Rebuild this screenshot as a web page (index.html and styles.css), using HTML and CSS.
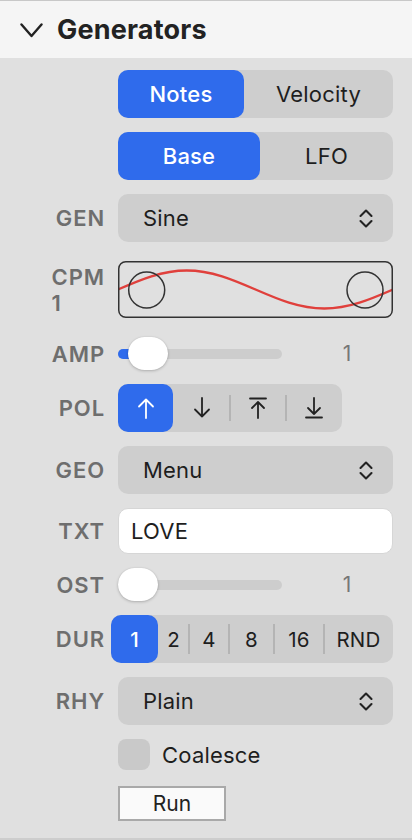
FILE: index.html
```html
<!DOCTYPE html>
<html>
<head>
<meta charset="utf-8">
<link rel="stylesheet" href="styles.css">
</head>
<body>
<div class="panel">
  <div class="header">
    <svg class="disclosure" width="23" height="15" viewBox="0 0 23 15"><polyline points="1.5,1.5 11.5,13 21.5,1.5" fill="none" stroke="#222" stroke-width="2.4" stroke-linecap="round" stroke-linejoin="round"/></svg>
    <span class="title">Generators</span>
  </div>
  <div class="form">
    <div class="seg seg-notes full">
      <div class="seg-item on">Notes</div>
      <div class="seg-item">Velocity</div>
    </div>
    <div class="seg seg-base full">
      <div class="seg-item on">Base</div>
      <div class="seg-item">LFO</div>
    </div>

    <div class="label">GEN</div>
    <div class="popup"><span>Sine</span>
      <svg class="updown" width="16" height="19" viewBox="0 0 16 19"><polyline points="2.5,7 8,1.5 13.5,7" fill="none" stroke="#222" stroke-width="2.1" stroke-linecap="round" stroke-linejoin="round"/><polyline points="2.5,12 8,17.5 13.5,12" fill="none" stroke="#222" stroke-width="2.1" stroke-linecap="round" stroke-linejoin="round"/></svg>
    </div>

    <div class="label label-multi">CPM<br>1</div>
    <div class="cpm">
      <svg width="275" height="57" viewBox="0 0 275 57">
        <path d="M0 28.5 C22.4 18.8 43.9 9.5 68.75 9.5 C93.6 9.5 115.1 18.8 137.5 28.5 C159.9 38.2 181.4 47.5 206.25 47.5 C231.1 47.5 252.6 38.2 275 28.5" fill="none" stroke="#e0403c" stroke-width="2.4"/>
        <rect x="0.75" y="0.75" width="273.5" height="55.5" rx="7" fill="none" stroke="#333" stroke-width="1.5"/>
        <circle cx="28.7" cy="29" r="18" fill="none" stroke="#333" stroke-width="1.5"/>
        <circle cx="247" cy="29" r="18" fill="none" stroke="#333" stroke-width="1.5"/>
      </svg>
    </div>

    <div class="label">AMP</div>
    <div class="slider-cell">
      <div class="slider">
        <div class="track"></div>
        <div class="fill" style="width:30px"></div>
        <div class="knob" style="left:10px"></div>
      </div>
      <span class="value">1</span>
    </div>

    <div class="label">POL</div>
    <div class="seg seg-pol">
      <div class="seg-item on"><svg width="18" height="22" viewBox="0 0 18 22"><path d="M9 2.5V21M2 9.5L9 2.5L16 9.5" fill="none" stroke="#fff" stroke-width="1.8" stroke-linecap="round" stroke-linejoin="round"/></svg></div>
      <div class="seg-item"><svg width="18" height="22" viewBox="0 0 18 22"><path d="M9 1V19.5M2 12.5L9 19.5L16 12.5" fill="none" stroke="#222" stroke-width="1.8" stroke-linecap="round" stroke-linejoin="round"/></svg></div>
      <div class="seg-item sep"><svg width="18" height="22" viewBox="0 0 18 22"><path d="M1 1.5H17M9 5V21M3 11L9 5L15 11" fill="none" stroke="#222" stroke-width="1.8" stroke-linecap="round" stroke-linejoin="round"/></svg></div>
      <div class="seg-item sep"><svg width="18" height="22" viewBox="0 0 18 22"><path d="M1 20.5H17M9 1V17M3 11L9 17L15 11" fill="none" stroke="#222" stroke-width="1.8" stroke-linecap="round" stroke-linejoin="round"/></svg></div>
    </div>

    <div class="label">GEO</div>
    <div class="popup"><span>Menu</span>
      <svg class="updown" width="16" height="19" viewBox="0 0 16 19"><polyline points="2.5,7 8,1.5 13.5,7" fill="none" stroke="#222" stroke-width="2.1" stroke-linecap="round" stroke-linejoin="round"/><polyline points="2.5,12 8,17.5 13.5,12" fill="none" stroke="#222" stroke-width="2.1" stroke-linecap="round" stroke-linejoin="round"/></svg>
    </div>

    <div class="label">TXT</div>
    <div class="field">LOVE</div>

    <div class="label">OST</div>
    <div class="slider-cell">
      <div class="slider">
        <div class="track"></div>
        <div class="knob" style="left:0px"></div>
      </div>
      <span class="value">1</span>
    </div>

    <div class="label">DUR</div>
    <div class="seg seg-dur">
      <div class="seg-item on">1</div>
      <div class="seg-item">2</div>
      <div class="seg-item sep">4</div>
      <div class="seg-item sep">8</div>
      <div class="seg-item sep">16</div>
      <div class="seg-item sep">RND</div>
    </div>

    <div class="label">RHY</div>
    <div class="popup"><span>Plain</span>
      <svg class="updown" width="16" height="19" viewBox="0 0 16 19"><polyline points="2.5,7 8,1.5 13.5,7" fill="none" stroke="#222" stroke-width="2.1" stroke-linecap="round" stroke-linejoin="round"/><polyline points="2.5,12 8,17.5 13.5,12" fill="none" stroke="#222" stroke-width="2.1" stroke-linecap="round" stroke-linejoin="round"/></svg>
    </div>

    <div class="check-row full">
      <span class="checkbox"></span>
      <span class="check-text">Coalesce</span>
    </div>

    <div class="run-row full">
      <button class="run">Run</button>
    </div>
  </div>
</div>
</body>
</html>
```

FILE: styles.css
```css
* { box-sizing: border-box; }

body {
  margin: 0;
  background: #ffffff;
  font-family: Inter, "Noto Sans", sans-serif;
  color: #1e1e1e;
}

.panel {
  width: 412px;
  height: 840px;
  background: #e0e0e0;
  border-top: 1px solid #c8c8c8;
  border-bottom: 2px solid #cdcdcd;
}

.header {
  height: 57px;
  background: #f5f5f5;
  display: flex;
  align-items: center;
  padding-left: 20px;
  gap: 14px;
}

.disclosure { margin-top: 1px; }

.title {
  font-size: 27px;
  font-weight: 700;
  color: #222;
  letter-spacing: 0.2px;
}

.form {
  display: grid;
  grid-template-columns: 104px 275px;
  column-gap: 14px;
  row-gap: 14px;
  padding-top: 12px;
  align-items: center;
}

.full { grid-column: 2; }

.label {
  justify-self: end;
  font-size: 22px;
  font-weight: 600;
  color: #6e6e6e;
  line-height: 24px;
  letter-spacing: 0.9px;
  margin-right: -1px;
}

.label-multi {
  text-align: left;
  line-height: 26px;
}

.seg {
  display: grid;
  height: 48px;
  background: #cecece;
  border-radius: 10px;
  font-size: 22px;
  letter-spacing: 0.2px;
}

.seg-notes { grid-template-columns: 126px 149px; }
.seg-base { grid-template-columns: 142px 133px; }
.seg-pol { grid-template-columns: 55px 57px 56px 56px; width: 224px; }
.seg-dur {
  grid-template-columns: 47px 31px 40px 45px 50px 69px;
  margin-left: -7px;
  font-size: 20.5px;
}

.seg-item {
  position: relative;
  display: flex;
  align-items: center;
  justify-content: center;
  color: #1e1e1e;
  border-radius: 10px;
}

.seg-item.on {
  background: #2f6bec;
  color: #ffffff;
  font-weight: 500;
}

.seg-item.sep::before {
  content: "";
  position: absolute;
  left: -1px;
  top: 11px;
  bottom: 11px;
  width: 1.5px;
  background: #b4b4b4;
}

.seg-dur .seg-item.sep::before { top: 9px; bottom: 9px; }

.popup {
  height: 48px;
  background: #cecece;
  border-radius: 10px;
  display: flex;
  align-items: center;
  justify-content: space-between;
  padding: 0 19px 0 25px;
  font-size: 22px;
  letter-spacing: 0.2px;
}

.cpm {
  height: 57px;
  margin: 5px 0;
}

.cpm svg { display: block; }

.slider-cell {
  display: flex;
  align-items: center;
}

.slider {
  position: relative;
  width: 164px;
  height: 33px;
}

.track {
  position: absolute;
  left: 0;
  right: 0;
  top: 11.5px;
  height: 10px;
  border-radius: 5px;
  background: #cdcdcd;
}

.fill {
  position: absolute;
  left: 0;
  top: 11.5px;
  height: 10px;
  border-radius: 5px;
  background: #2f6bec;
}

.knob {
  position: absolute;
  top: 0;
  width: 40px;
  height: 33px;
  border-radius: 16.5px;
  background: #ffffff;
  box-shadow: 0 1px 3px rgba(0, 0, 0, 0.22), 0 0 1px rgba(0, 0, 0, 0.15);
}

.value {
  width: 20px;
  margin-left: 55px;
  text-align: center;
  font-size: 21px;
  color: #777;
}

.field {
  height: 46px;
  background: #ffffff;
  border: 1px solid #d6d6d6;
  border-radius: 10px;
  display: flex;
  align-items: center;
  padding-left: 12px;
  font-size: 22px;
  letter-spacing: 0.2px;
}

.check-row {
  display: flex;
  align-items: center;
  gap: 12px;
  height: 31px;
}

.checkbox {
  width: 32px;
  height: 31px;
  border-radius: 8px;
  background: #c9c9c9;
}

.check-text { font-size: 22px; letter-spacing: 0.2px; }

.run-row { margin-top: 2px; }

.run {
  width: 108px;
  height: 35px;
  border: 2px solid #a9a9a9;
  background: #fafafa;
  border-radius: 0;
  font-family: Inter, "Noto Sans", sans-serif;
  font-size: 21px;
  color: #222;
  padding: 0;
}
```
